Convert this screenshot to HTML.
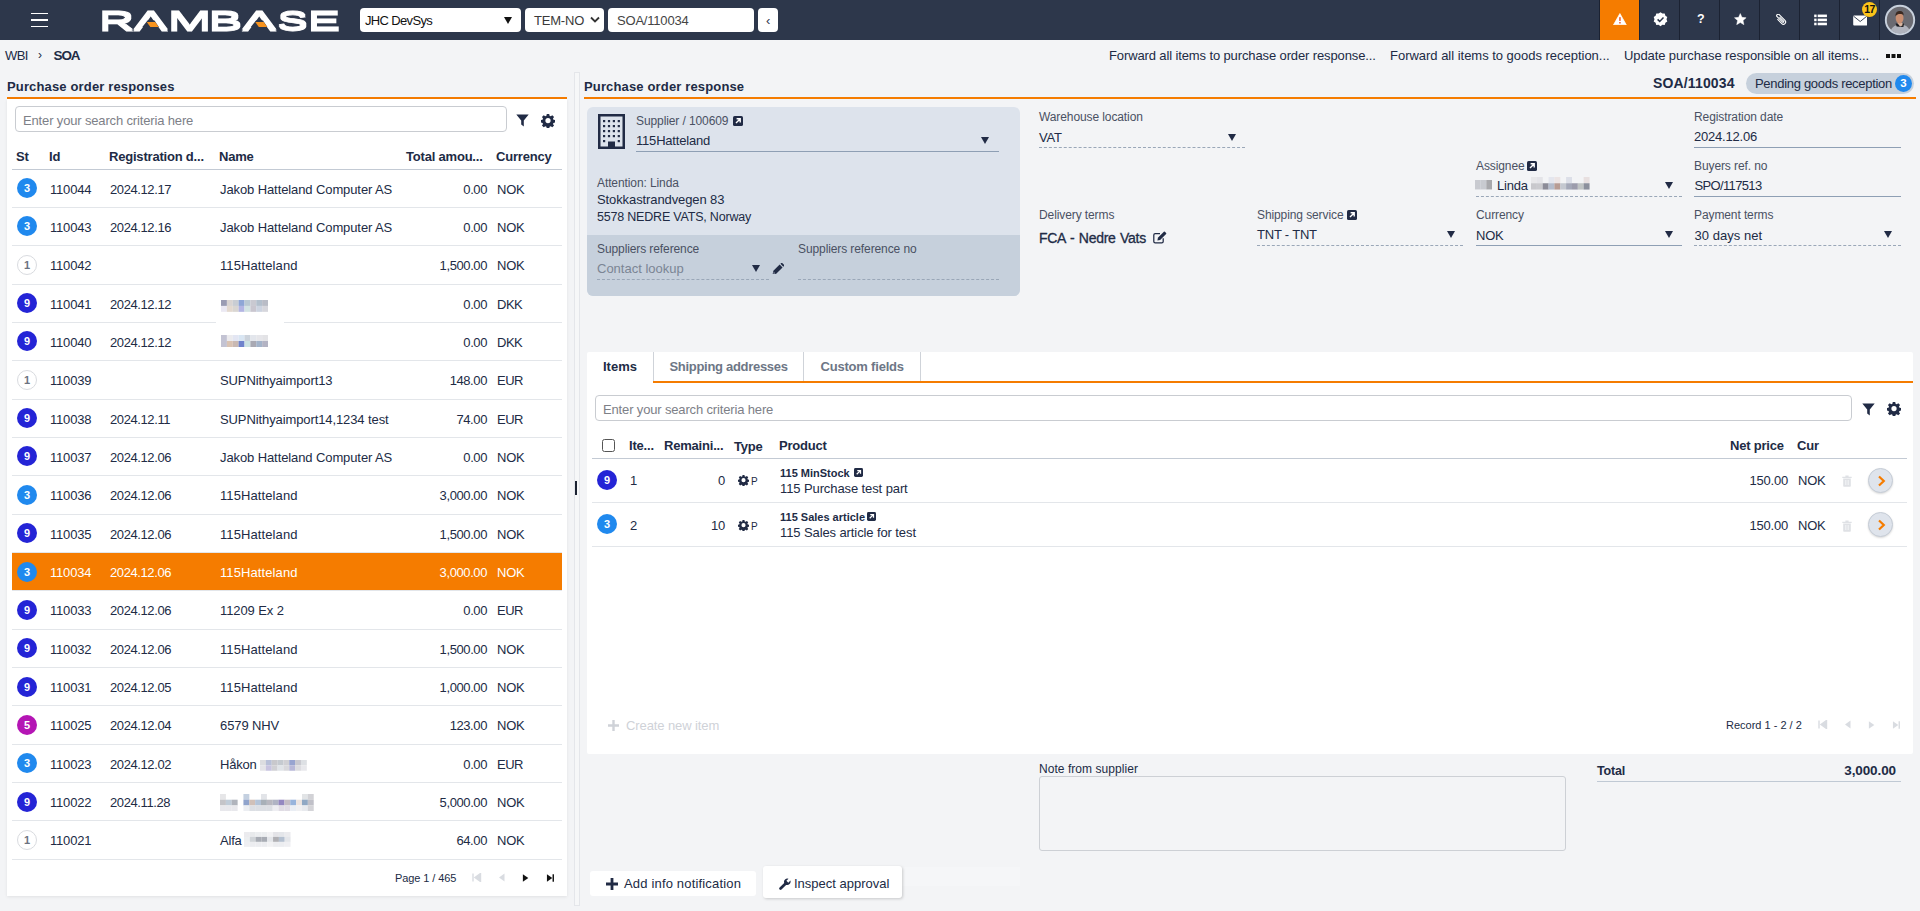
<!DOCTYPE html>
<html lang="en">
<head>
<meta charset="utf-8">
<title>RamBase - SOA/110034</title>
<style>
*{box-sizing:border-box;margin:0;padding:0}
html,body{width:1920px;height:911px;overflow:hidden}
body{background:#f3f4f6;font-family:"Liberation Sans",sans-serif;font-size:13px;color:#212b45;position:relative;letter-spacing:-0.2px}
.abs{position:absolute;white-space:nowrap}
.b{font-weight:700}
i{font-style:normal}
#topbar{position:absolute;left:0;top:0;width:1920px;height:40px;background:#2d374b}
.tbox{position:absolute;top:8px;height:24px;background:#fff;border-radius:4px;color:#111;font-size:13px;line-height:26px;white-space:nowrap}
.tcell{position:absolute;top:0;height:40px;width:40px;border-left:1px solid #1b2232}
.tcell svg{position:absolute}
.ptitle{position:absolute;font-weight:700;font-size:13px;white-space:nowrap;letter-spacing:0.15px;line-height:16px}
.oline{position:absolute;height:2px;background:#f57c00}
.card{position:absolute;background:#fff}
.search{position:absolute;height:26px;border:1px solid #c9ccd1;border-radius:4px;background:#fff;color:#7d8087;line-height:27px;padding-left:7px;white-space:nowrap;letter-spacing:-0.15px}
.th{position:absolute;font-weight:700;white-space:nowrap;letter-spacing:-0.2px;line-height:16px}
.lrow{position:absolute;left:12px;width:550px;height:38px;border-bottom:1px solid #e3e6ea}
.lrow span{position:absolute;top:12px;line-height:15px;white-space:nowrap}
.lrow.sel{background:#f57c00;color:#fff;background-clip:padding-box}
.st{position:absolute;width:20px;height:20px;border-radius:50%;color:#fff;font-weight:700;font-size:11px;line-height:20px;text-align:center;letter-spacing:0}
.st3{background:#2089ee}
.st9{background:#2424d6}
.st5{background:#b415b4}
.st1{background:#fff;border:1px solid #d9dbdf;color:#6b7280;line-height:18px}
.blur{position:absolute;background:#dfe2ea;filter:blur(.6px)}
.lbl{position:absolute;font-size:12px;color:#4a5163;white-space:nowrap;letter-spacing:-0.1px;line-height:16px}
.val{position:absolute;font-size:13px;white-space:nowrap;line-height:16px}
.uls{position:absolute;height:1px;background:#8e9fb4}
.uld{position:absolute;height:0;border-top:1px dashed #9aa7b8}
.dd{position:absolute;width:0;height:0;border-left:4.5px solid transparent;border-right:4.5px solid transparent;border-top:7px solid #212b45}
.t16{line-height:16px}
</style>
</head>
<body>
<div id="topbar">
<div class="abs" style="left:31px;top:12.5px;width:17px;height:1.5px;background:#fff"></div>
<div class="abs" style="left:31px;top:19px;width:17px;height:1.5px;background:#fff"></div>
<div class="abs" style="left:31px;top:25.5px;width:17px;height:1.5px;background:#fff"></div>
<svg class="abs" style="left:98px;top:6px" width="246" height="28" viewBox="0 0 246 28" role="img" aria-label="RAMBASE"><title>RAMBASE</title><filter id="lg" x="-5%" y="-20%" width="110%" height="140%"><feMorphology operator="dilate" radius="0 0.8"/></filter><g font-family="Liberation Sans, sans-serif" font-size="26.5" font-weight="400" fill="#fff" stroke="#fff" stroke-width="0.8" filter="url(#lg)"><text transform="translate(1.04 23.70) scale(1.838 1)">R</text><text transform="translate(36.34 23.70) scale(1.859 1)">A</text><text transform="translate(69.80 23.70) scale(1.977 1)">M</text><text transform="translate(110.51 23.70) scale(1.913 1)">B</text><text transform="translate(144.84 23.70) scale(1.859 1)">A</text><text transform="translate(179.47 23.70) scale(1.710 1)">S</text><text transform="translate(209.66 23.70) scale(1.828 1)">E</text></g><path d="M49.50 14.50 L56.50 14.50 L60.80 20.90 L44.30 20.90 Z" fill="#2d374b"/><path d="M48.80 15.90 L57.20 15.90 L60.70 21.00 L52.30 21.00 Z" fill="#f7931e"/><path d="M158.00 14.50 L165.00 14.50 L169.30 20.90 L152.80 20.90 Z" fill="#2d374b"/><path d="M157.30 15.90 L165.70 15.90 L169.20 21.00 L160.80 21.00 Z" fill="#f7931e"/></svg>
<div class="tbox" style="left:360px;width:161px;padding-left:5px;letter-spacing:-0.65px">JHC DevSys<div class="dd" style="left:144px;top:9px;border-top-color:#111"></div></div>
<div class="tbox" style="left:525px;width:79px;padding-left:9px;color:#3a3a3a">TEM-NO<svg class="abs" style="left:65px;top:8px" width="10" height="8" viewBox="0 0 10 8"><path d="M1 1.5 L5 5.5 L9 1.5" fill="none" stroke="#333" stroke-width="1.8"/></svg></div>
<div class="tbox" style="left:608px;width:146px;padding-left:9px;color:#444">SOA/110034</div>
<div class="tbox" style="left:758px;width:20px;text-align:center;color:#2d374b">&#8249;</div>
<div class="tcell" style="left:1599px;background:#f57c00"><svg style="left:13px;top:12.6px" width="13.8" height="12.6" viewBox="0 0 15 14"><path d="M7.5 0.6 L14.6 13.2 L0.4 13.2 Z" fill="#fff" stroke="#fff" stroke-width="0.8" stroke-linejoin="round"/><rect x="6.7" y="4.6" width="1.7" height="4.2" fill="#f05a28"/><rect x="6.7" y="10" width="1.7" height="1.7" fill="#f05a28"/></svg></div>
<div class="tcell" style="left:1639px"><svg style="left:13px;top:12px" width="15" height="15" viewBox="0 0 15 15"><path d="M7.5 0.3 L9.4 1.6 L11.7 1.5 L12.4 3.7 L14.3 5 L13.5 7.2 L14.3 9.4 L12.4 10.7 L11.7 12.9 L9.4 12.8 L7.5 14.2 L5.6 12.8 L3.3 12.9 L2.6 10.7 L0.7 9.4 L1.5 7.2 L0.7 5 L2.6 3.7 L3.3 1.5 L5.6 1.6 Z" fill="#fff"/><path d="M4.6 7.4 L6.7 9.4 L10.5 5.4" fill="none" stroke="#2d374b" stroke-width="1.5"/></svg></div>
<div class="tcell" style="left:1679px"><span class="abs b" style="left:17px;top:12px;color:#fff;font-size:12.5px;letter-spacing:0">?</span></div>
<div class="tcell" style="left:1719px"><svg style="left:14px;top:13px" width="12.6" height="12.4" viewBox="0 0 14 14"><path d="M7 0.6 L8.9 4.9 L13.6 5.4 L10.1 8.5 L11.1 13.2 L7 10.8 L2.9 13.2 L3.9 8.5 L0.4 5.4 L5.1 4.9 Z" fill="#fff" stroke="#fff" stroke-width="0.5" stroke-linejoin="round"/></svg></div>
<div class="tcell" style="left:1759px"><svg style="left:14.5px;top:14px" width="12" height="11.2" viewBox="0 0 14 13"><g transform="rotate(-45 7 6.5)"><path d="M3.2 2 L3.2 9.2 A2.6 2.6 0 0 0 8.4 9.2 L8.4 -0.3 A1.7 1.7 0 0 0 5 -0.3 L5 8.6 A0.85 0.85 0 0 0 6.7 8.6 L6.7 2" transform="translate(1.2 1.2)" fill="none" stroke="#fff" stroke-width="1.3"/></g></svg></div>
<div class="tcell" style="left:1799px"><svg style="left:14px;top:13.5px" width="13.3" height="12" viewBox="0 0 14 13"><g fill="#fff"><rect x="0" y="0.6" width="2.6" height="2.8"/><rect x="3.8" y="0.6" width="10" height="2.8"/><rect x="0" y="5" width="2.6" height="2.8"/><rect x="3.8" y="5" width="10" height="2.8"/><rect x="0" y="9.4" width="2.6" height="2.8"/><rect x="3.8" y="9.4" width="10" height="2.8"/></g></svg></div>
<div class="tcell" style="left:1839px"><svg style="left:13px;top:14.6px" width="14.4" height="11.2" viewBox="0 0 15 12"><rect x="0" y="0.6" width="15" height="10.6" rx="1" fill="#fff"/><path d="M0.3 1.2 L7.5 7 L14.7 1.2" fill="none" stroke="#2d374b" stroke-width="1"/></svg>
<div class="abs b" style="left:22px;top:2px;width:15px;height:15px;border-radius:50%;background:#fcc419;color:#111;font-size:10.5px;line-height:15.5px;text-align:center;letter-spacing:-0.5px">17</div></div>
<div class="tcell" style="left:1879px;width:41px"><svg style="left:4px;top:4px" width="32" height="32" viewBox="0 0 32 32"><defs><clipPath id="avc"><circle cx="16" cy="16" r="13.4"/></clipPath><filter id="avb"><feGaussianBlur stdDeviation="0.55"/></filter></defs><circle cx="16" cy="16" r="14.2" fill="#6b6b72" stroke="#c8d1dd" stroke-width="1.9"/><g clip-path="url(#avc)" filter="url(#avb)"><path d="M5.5 32 C6 24.5 9.5 22 13 21 L19.5 21 C23.5 22 26 24.5 26.5 32 Z" fill="#b0b3bd"/><path d="M11.6 19.6 L20 19.6 L19.4 23 L12.6 22.6 Z" fill="#1d1d20"/><path d="M13.4 19 L18.6 19 L18.4 21.6 L16 22.4 Z" fill="#d9b7a3"/><ellipse cx="15.6" cy="14" rx="3.9" ry="5.6" fill="#c98f72"/><path d="M11.5 12.2 C11.2 8 14 6.9 16 7 C18.6 7 19.8 8.6 19.6 11.4 C18 9.6 13.6 9.4 11.5 12.2 Z" fill="#3a2a22"/></g></svg></div>
<div class="abs t16" style="left:5px;top:48px;letter-spacing:-0.55px">WBI</div>
<div class="abs t16" style="left:38px;top:47px;font-size:12px">&#8250;</div>
<div class="abs b t16" style="left:53.5px;top:48px;font-size:13.5px;letter-spacing:-1.1px">SOA</div>
<div class="abs t16" style="left:1109px;top:48px;letter-spacing:-0.12px">Forward all items to purchase order response...</div>
<div class="abs t16" style="left:1390px;top:48px;letter-spacing:-0.02px">Forward all items to goods reception...</div>
<div class="abs t16" style="left:1624px;top:48px;letter-spacing:-0.1px">Update purchase responsible on all items...</div>
<div class="abs" style="left:1886px;top:54px;width:4px;height:4px;background:#111;box-shadow:5.5px 0 0 #111,11px 0 0 #111"></div>
<div class="ptitle" style="left:7px;top:79px">Purchase order responses</div>
<div class="oline" style="left:7px;top:97px;width:560px"></div>
<div class="card" style="left:7px;top:99px;width:560px;height:797px;box-shadow:0 1px 3px rgba(0,0,0,.08)"></div>
<div class="search" style="left:15px;top:106px;width:492px">Enter your search criteria here</div>
<svg class="abs" style="left:516px;top:114px" width="13" height="13" viewBox="0 0 13 13"><path d="M0.3 0.5 H12.7 L7.8 6.4 V12.6 L5.2 10.4 V6.4 Z" fill="#212b45"/></svg><svg class="abs" style="left:541px;top:113.5px" width="14" height="14" viewBox="0 0 16 16"><path fill="#212b45" fill-rule="evenodd" d="M6.6 0.5h2.8l.4 2.1 1.3.55 1.8-1.2 2 2-1.2 1.8.55 1.3 2.1.4v2.8l-2.1.4-.55 1.3 1.2 1.8-2 2-1.8-1.2-1.3.55-.4 2.1H6.6l-.4-2.1-1.3-.55-1.8 1.2-2-2 1.2-1.8-.55-1.3-2.1-.4V7.45l2.1-.4.55-1.3-1.2-1.8 2-2 1.8 1.2 1.3-.55zM8 5a3 3 0 1 0 0 6 3 3 0 0 0 0-6z" transform="translate(0 -0.5)"/></svg>
<div class="th" style="left:16px;top:149px">St</div>
<div class="th" style="left:49px;top:149px">Id</div>
<div class="th" style="left:109px;top:149px">Registration d...</div>
<div class="th" style="left:219px;top:149px">Name</div>
<div class="th" style="left:406px;top:149px">Total amou...</div>
<div class="th" style="left:496px;top:149px">Currency</div>
<div class="abs" style="left:12px;top:169px;width:550px;height:1px;background:#c3cad4"></div>
<div class="lrow" style="top:170px;height:38px"><i class="st st3" style="left:5px;top:8px">3</i><span style="left:38px">110044</span><span style="left:98px;letter-spacing:-0.4px">2024.12.17</span><span style="left:208px;letter-spacing:-0.1px">Jakob Hatteland Computer AS</span><span style="right:75px;letter-spacing:-0.4px">0.00</span><span style="left:485px;letter-spacing:-0.2px">NOK</span></div>
<div class="lrow" style="top:208px;height:38px"><i class="st st3" style="left:5px;top:8px">3</i><span style="left:38px">110043</span><span style="left:98px;letter-spacing:-0.4px">2024.12.16</span><span style="left:208px;letter-spacing:-0.1px">Jakob Hatteland Computer AS</span><span style="right:75px;letter-spacing:-0.4px">0.00</span><span style="left:485px;letter-spacing:-0.2px">NOK</span></div>
<div class="lrow" style="top:246px;height:39px"><i class="st st1" style="left:5px;top:9px">1</i><span style="left:38px">110042</span><span style="left:98px;letter-spacing:-0.4px"></span><span style="left:208px;letter-spacing:0.1px">115Hatteland</span><span style="right:75px;letter-spacing:-0.4px">1,500.00</span><span style="left:485px;letter-spacing:-0.2px">NOK</span></div>
<div class="lrow" style="top:285px;height:38px"><i class="st st9" style="left:5px;top:8px">9</i><span style="left:38px">110041</span><span style="left:98px;letter-spacing:-0.4px">2024.12.12</span><span style="right:75px;letter-spacing:-0.4px">0.00</span><span style="left:485px;letter-spacing:-0.5px">DKK</span></div>
<div class="lrow" style="top:323px;height:38px"><i class="st st9" style="left:5px;top:8px">9</i><span style="left:38px">110040</span><span style="left:98px;letter-spacing:-0.4px">2024.12.12</span><span style="right:75px;letter-spacing:-0.4px">0.00</span><span style="left:485px;letter-spacing:-0.5px">DKK</span></div>
<div class="lrow" style="top:361px;height:39px"><i class="st st1" style="left:5px;top:9px">1</i><span style="left:38px">110039</span><span style="left:98px;letter-spacing:-0.4px"></span><span style="left:208px;letter-spacing:-0.1px">SUPNithyaimport13</span><span style="right:75px;letter-spacing:-0.4px">148.00</span><span style="left:485px;letter-spacing:-0.5px">EUR</span></div>
<div class="lrow" style="top:400px;height:38px"><i class="st st9" style="left:5px;top:8px">9</i><span style="left:38px">110038</span><span style="left:98px;letter-spacing:-0.4px">2024.12.11</span><span style="left:208px;letter-spacing:-0.1px">SUPNithyaimport14,1234 test</span><span style="right:75px;letter-spacing:-0.4px">74.00</span><span style="left:485px;letter-spacing:-0.5px">EUR</span></div>
<div class="lrow" style="top:438px;height:38px"><i class="st st9" style="left:5px;top:8px">9</i><span style="left:38px">110037</span><span style="left:98px;letter-spacing:-0.4px">2024.12.06</span><span style="left:208px;letter-spacing:-0.1px">Jakob Hatteland Computer AS</span><span style="right:75px;letter-spacing:-0.4px">0.00</span><span style="left:485px;letter-spacing:-0.2px">NOK</span></div>
<div class="lrow" style="top:476px;height:39px"><i class="st st3" style="left:5px;top:9px">3</i><span style="left:38px">110036</span><span style="left:98px;letter-spacing:-0.4px">2024.12.06</span><span style="left:208px;letter-spacing:0.1px">115Hatteland</span><span style="right:75px;letter-spacing:-0.4px">3,000.00</span><span style="left:485px;letter-spacing:-0.2px">NOK</span></div>
<div class="lrow" style="top:515px;height:38px"><i class="st st9" style="left:5px;top:8px">9</i><span style="left:38px">110035</span><span style="left:98px;letter-spacing:-0.4px">2024.12.06</span><span style="left:208px;letter-spacing:0.1px">115Hatteland</span><span style="right:75px;letter-spacing:-0.4px">1,500.00</span><span style="left:485px;letter-spacing:-0.2px">NOK</span></div>
<div class="lrow sel" style="top:553px;height:38px"><i class="st st3" style="left:5px;top:9px">3</i><span style="left:38px">110034</span><span style="left:98px;letter-spacing:-0.4px">2024.12.06</span><span style="left:208px;letter-spacing:0.1px">115Hatteland</span><span style="right:75px;letter-spacing:-0.4px">3,000.00</span><span style="left:485px;letter-spacing:-0.2px">NOK</span></div>
<div class="lrow" style="top:591px;height:39px"><i class="st st9" style="left:5px;top:9px">9</i><span style="left:38px">110033</span><span style="left:98px;letter-spacing:-0.4px">2024.12.06</span><span style="left:208px;letter-spacing:-0.1px">11209 Ex 2</span><span style="right:75px;letter-spacing:-0.4px">0.00</span><span style="left:485px;letter-spacing:-0.5px">EUR</span></div>
<div class="lrow" style="top:630px;height:38px"><i class="st st9" style="left:5px;top:8px">9</i><span style="left:38px">110032</span><span style="left:98px;letter-spacing:-0.4px">2024.12.06</span><span style="left:208px;letter-spacing:0.1px">115Hatteland</span><span style="right:75px;letter-spacing:-0.4px">1,500.00</span><span style="left:485px;letter-spacing:-0.2px">NOK</span></div>
<div class="lrow" style="top:668px;height:38px"><i class="st st9" style="left:5px;top:9px">9</i><span style="left:38px">110031</span><span style="left:98px;letter-spacing:-0.4px">2024.12.05</span><span style="left:208px;letter-spacing:0.1px">115Hatteland</span><span style="right:75px;letter-spacing:-0.4px">1,000.00</span><span style="left:485px;letter-spacing:-0.2px">NOK</span></div>
<div class="lrow" style="top:706px;height:39px"><i class="st st5" style="left:5px;top:9px">5</i><span style="left:38px">110025</span><span style="left:98px;letter-spacing:-0.4px">2024.12.04</span><span style="left:208px;letter-spacing:-0.1px">6579 NHV</span><span style="right:75px;letter-spacing:-0.4px">123.00</span><span style="left:485px;letter-spacing:-0.2px">NOK</span></div>
<div class="lrow" style="top:745px;height:38px"><i class="st st3" style="left:5px;top:8px">3</i><span style="left:38px">110023</span><span style="left:98px;letter-spacing:-0.4px">2024.12.02</span><span style="left:208px">Håkon</span><span style="right:75px;letter-spacing:-0.4px">0.00</span><span style="left:485px;letter-spacing:-0.5px">EUR</span></div>
<div class="lrow" style="top:783px;height:38px"><i class="st st9" style="left:5px;top:9px">9</i><span style="left:38px">110022</span><span style="left:98px;letter-spacing:-0.4px">2024.11.28</span><span style="right:75px;letter-spacing:-0.4px">5,000.00</span><span style="left:485px;letter-spacing:-0.2px">NOK</span></div>
<div class="lrow" style="top:821px;height:39px"><i class="st st1" style="left:5px;top:9px">1</i><span style="left:38px">110021</span><span style="left:98px;letter-spacing:-0.4px"></span><span style="left:208px">Alfa</span><span style="right:75px;letter-spacing:-0.4px">64.00</span><span style="left:485px;letter-spacing:-0.2px">NOK</span></div>
<svg class="abs" style="left:221px;top:300px" width="47" height="11.8" viewBox="0 0 47 11.8"><rect x="0.00" y="0.00" width="5.92" height="5.95" fill="#9a9cb3"/><rect x="5.88" y="0.00" width="5.92" height="5.95" fill="#d9d4d2"/><rect x="11.75" y="0.00" width="5.92" height="5.95" fill="#c9cdd3"/><rect x="17.62" y="0.00" width="5.92" height="5.95" fill="#8fa6d6"/><rect x="23.50" y="0.00" width="5.92" height="5.95" fill="#b9c8d3"/><rect x="29.38" y="0.00" width="5.92" height="5.95" fill="#c9c9d1"/><rect x="35.25" y="0.00" width="5.92" height="5.95" fill="#b3bfcc"/><rect x="41.12" y="0.00" width="5.92" height="5.95" fill="#b9bcc6"/><rect x="0.00" y="5.90" width="5.92" height="5.95" fill="#ebe9f3"/><rect x="5.88" y="5.90" width="5.92" height="5.95" fill="#e3d9cf"/><rect x="11.75" y="5.90" width="5.92" height="5.95" fill="#d9d6d2"/><rect x="17.62" y="5.90" width="5.92" height="5.95" fill="#b3b5e3"/><rect x="23.50" y="5.90" width="5.92" height="5.95" fill="#d3e3e3"/><rect x="29.38" y="5.90" width="5.92" height="5.95" fill="#c9c6cf"/><rect x="35.25" y="5.90" width="5.92" height="5.95" fill="#ccd3e0"/><rect x="41.12" y="5.90" width="5.92" height="5.95" fill="#d6d6dc"/></svg><svg class="abs" style="left:221px;top:335px" width="47" height="12" viewBox="0 0 47 12"><rect x="0.00" y="0.00" width="5.92" height="6.05" fill="#c3c3d3"/><rect x="5.88" y="0.00" width="5.92" height="6.05" fill="#ecebee"/><rect x="11.75" y="0.00" width="5.92" height="6.05" fill="#e3e6f3"/><rect x="17.62" y="0.00" width="5.92" height="6.05" fill="#d9e6f3"/><rect x="23.50" y="0.00" width="5.92" height="6.05" fill="#ccd3dc"/><rect x="29.38" y="0.00" width="5.92" height="6.05" fill="#e3e6ec"/><rect x="35.25" y="0.00" width="5.92" height="6.05" fill="#e6e6ea"/><rect x="41.12" y="0.00" width="5.92" height="6.05" fill="#e3e3e6"/><rect x="0.00" y="6.00" width="5.92" height="6.05" fill="#c3c3d3"/><rect x="5.88" y="6.00" width="5.92" height="6.05" fill="#d9c3b3"/><rect x="11.75" y="6.00" width="5.92" height="6.05" fill="#c9b9b3"/><rect x="17.62" y="6.00" width="5.92" height="6.05" fill="#6f83cc"/><rect x="23.50" y="6.00" width="5.92" height="6.05" fill="#cce3e3"/><rect x="29.38" y="6.00" width="5.92" height="6.05" fill="#a9a9b3"/><rect x="35.25" y="6.00" width="5.92" height="6.05" fill="#a3b3c9"/><rect x="41.12" y="6.00" width="5.92" height="6.05" fill="#b3b3c3"/></svg><svg class="abs" style="left:260px;top:760px" width="46.8" height="10.7" viewBox="0 0 46.8 10.7"><rect x="0.00" y="0.00" width="5.90" height="5.40" fill="#dcdde0"/><rect x="5.85" y="0.00" width="5.90" height="5.40" fill="#b8c0d8"/><rect x="11.70" y="0.00" width="5.90" height="5.40" fill="#c8c8cc"/><rect x="17.55" y="0.00" width="5.90" height="5.40" fill="#c5cad0"/><rect x="23.40" y="0.00" width="5.90" height="5.40" fill="#d0d0d4"/><rect x="29.25" y="0.00" width="5.90" height="5.40" fill="#98a4d0"/><rect x="35.10" y="0.00" width="5.90" height="5.40" fill="#c8c8d0"/><rect x="40.95" y="0.00" width="5.90" height="5.40" fill="#dde0e4"/><rect x="0.00" y="5.35" width="5.90" height="5.40" fill="#e4e4e8"/><rect x="5.85" y="5.35" width="5.90" height="5.40" fill="#c8c4e0"/><rect x="11.70" y="5.35" width="5.90" height="5.40" fill="#d0d0d4"/><rect x="17.55" y="5.35" width="5.90" height="5.40" fill="#e0e4e8"/><rect x="23.40" y="5.35" width="5.90" height="5.40" fill="#d8d8dc"/><rect x="29.25" y="5.35" width="5.90" height="5.40" fill="#b8b8d8"/><rect x="35.10" y="5.35" width="5.90" height="5.40" fill="#dcdce0"/><rect x="40.95" y="5.35" width="5.90" height="5.40" fill="#e8e8ec"/></svg><svg class="abs" style="left:220px;top:793.8px" width="93.7" height="17.1" viewBox="0 0 93.7 17.1"><rect x="0.00" y="0.00" width="5.91" height="5.75" fill="#e6e6e8"/><rect x="23.43" y="0.00" width="5.91" height="5.75" fill="#c4d0e0"/><rect x="40.99" y="0.00" width="5.91" height="5.75" fill="#e2e4e8"/><rect x="81.99" y="0.00" width="5.91" height="5.75" fill="#e2e4e6"/><rect x="87.84" y="0.00" width="5.91" height="5.75" fill="#d2d2d6"/><rect x="0.00" y="5.70" width="5.91" height="5.75" fill="#c4c4c8"/><rect x="5.86" y="5.70" width="5.91" height="5.75" fill="#c0ccd8"/><rect x="11.71" y="5.70" width="5.91" height="5.75" fill="#b0b4bc"/><rect x="23.43" y="5.70" width="5.91" height="5.75" fill="#90a4cc"/><rect x="29.28" y="5.70" width="5.91" height="5.75" fill="#d0c0b8"/><rect x="35.14" y="5.70" width="5.91" height="5.75" fill="#b4c4d8"/><rect x="40.99" y="5.70" width="5.91" height="5.75" fill="#a8b0b8"/><rect x="46.85" y="5.70" width="5.91" height="5.75" fill="#b8b8c0"/><rect x="52.71" y="5.70" width="5.91" height="5.75" fill="#b0b4c4"/><rect x="58.56" y="5.70" width="5.91" height="5.75" fill="#9488c0"/><rect x="64.42" y="5.70" width="5.91" height="5.75" fill="#c4bcc4"/><rect x="70.28" y="5.70" width="5.91" height="5.75" fill="#98b4dc"/><rect x="76.13" y="5.70" width="5.91" height="5.75" fill="#ece4e0"/><rect x="81.99" y="5.70" width="5.91" height="5.75" fill="#90a8c4"/><rect x="87.84" y="5.70" width="5.91" height="5.75" fill="#c0c0c8"/><rect x="0.00" y="11.40" width="5.91" height="5.75" fill="#e8e8ec"/><rect x="5.86" y="11.40" width="5.91" height="5.75" fill="#e8e8ec"/><rect x="11.71" y="11.40" width="5.91" height="5.75" fill="#e8e8ec"/><rect x="23.43" y="11.40" width="5.91" height="5.75" fill="#eceef2"/><rect x="29.28" y="11.40" width="5.91" height="5.75" fill="#dcdfe4"/><rect x="35.14" y="11.40" width="5.91" height="5.75" fill="#dcdfe4"/><rect x="40.99" y="11.40" width="5.91" height="5.75" fill="#dcdfe4"/><rect x="46.85" y="11.40" width="5.91" height="5.75" fill="#dcdfe4"/><rect x="52.71" y="11.40" width="5.91" height="5.75" fill="#eeeef2"/><rect x="58.56" y="11.40" width="5.91" height="5.75" fill="#e0dce4"/><rect x="64.42" y="11.40" width="5.91" height="5.75" fill="#e0dce4"/><rect x="70.28" y="11.40" width="5.91" height="5.75" fill="#eaeef4"/><rect x="76.13" y="11.40" width="5.91" height="5.75" fill="#f0f0f2"/><rect x="81.99" y="11.40" width="5.91" height="5.75" fill="#e8eaee"/><rect x="87.84" y="11.40" width="5.91" height="5.75" fill="#d4d4d8"/></svg><svg class="abs" style="left:244.2px;top:832px" width="46.5" height="14.8" viewBox="0 0 46.5 14.8"><rect x="0.00" y="0.00" width="5.86" height="4.98" fill="#ebebee"/><rect x="5.81" y="0.00" width="5.86" height="4.98" fill="#e8eaec"/><rect x="11.62" y="0.00" width="5.86" height="4.98" fill="#eceef0"/><rect x="17.44" y="0.00" width="5.86" height="4.98" fill="#eceef0"/><rect x="23.25" y="0.00" width="5.86" height="4.98" fill="#f2f2f4"/><rect x="29.06" y="0.00" width="5.86" height="4.98" fill="#e4e4e8"/><rect x="34.88" y="0.00" width="5.86" height="4.98" fill="#e4e6ea"/><rect x="40.69" y="0.00" width="5.86" height="4.98" fill="#ebebee"/><rect x="0.00" y="4.93" width="5.86" height="4.98" fill="#eceef0"/><rect x="5.81" y="4.93" width="5.86" height="4.98" fill="#d0d4d8"/><rect x="11.62" y="4.93" width="5.86" height="4.98" fill="#a8acb4"/><rect x="17.44" y="4.93" width="5.86" height="4.98" fill="#a8acb4"/><rect x="23.25" y="4.93" width="5.86" height="4.98" fill="#e4e6ea"/><rect x="29.06" y="4.93" width="5.86" height="4.98" fill="#b0b0b4"/><rect x="34.88" y="4.93" width="5.86" height="4.98" fill="#b4c0d0"/><rect x="40.69" y="4.93" width="5.86" height="4.98" fill="#e4e6ea"/><rect x="0.00" y="9.87" width="5.86" height="4.98" fill="#efeff2"/><rect x="5.81" y="9.87" width="5.86" height="4.98" fill="#ecedf0"/><rect x="11.62" y="9.87" width="5.86" height="4.98" fill="#ecedf0"/><rect x="17.44" y="9.87" width="5.86" height="4.98" fill="#ecedf0"/><rect x="23.25" y="9.87" width="5.86" height="4.98" fill="#f2f2f4"/><rect x="29.06" y="9.87" width="5.86" height="4.98" fill="#ecedf0"/><rect x="34.88" y="9.87" width="5.86" height="4.98" fill="#ecedf0"/><rect x="40.69" y="9.87" width="5.86" height="4.98" fill="#efeff2"/></svg><div class="abs" style="left:216px;top:322px;width:68px;height:2px;background:#fff"></div><div class="abs" style="left:395px;top:871px;line-height:14px;font-size:11px;letter-spacing:-0.1px">Page 1 / 465</div>
<svg class="abs" style="left:472px;top:873px" width="10" height="9" viewBox="0 0 10 9"><path d="M1 0.5v8M8.5 0.5 3 4.5l5.5 4z" fill="#d9dce1" stroke="#d9dce1" stroke-width="1.4"/></svg>
<svg class="abs" style="left:498px;top:873px" width="8" height="9" viewBox="0 0 8 9"><path d="M6.5 0.5 1 4.5l5.5 4z" fill="#d9dce1"/></svg>
<svg class="abs" style="left:522px;top:873.5px" width="7" height="8" viewBox="0 0 8 9"><path d="M1 0.3 7.2 4.5 1 8.7z" fill="#111"/></svg>
<svg class="abs" style="left:545.5px;top:873.5px" width="9" height="8" viewBox="0 0 10 9"><path d="M1 0.3 7 4.5 1 8.7z" fill="#111"/><rect x="7.3" y="0.3" width="1.6" height="8.4" fill="#111"/></svg>

<div class="abs" style="left:574px;top:72px;width:6px;height:834px;background:#f6f7f8;border:1px solid #e4e6ea"></div>
<div class="abs" style="left:575px;top:481px;width:2px;height:14px;background:#1b2232"></div>
<div class="ptitle" style="left:584px;top:79px">Purchase order response</div>
<div class="abs b t16" style="left:1653px;top:75px;font-size:14px;letter-spacing:0.15px">SOA/110034</div>
<div class="abs" style="left:1746px;top:73px;width:167.5px;height:21px;border-radius:10.5px;background:#c6d0dc;line-height:22px;padding-left:9px;letter-spacing:-0.3px">Pending goods reception<i class="st st3" style="left:149px;top:2px;width:17px;height:17px;line-height:17px;font-size:11.5px">3</i></div>
<div class="oline" style="left:584px;top:97px;width:1332px"></div>
<div class="abs" style="left:587px;top:107px;width:433px;height:189px;border-radius:6px;background:#dde3ec;overflow:hidden"><div class="abs" style="left:0;top:128px;width:433px;height:61px;background:#c6d0dc"></div></div>
<svg class="abs" style="left:598px;top:114px" width="27" height="35" viewBox="0 0 27 35"><rect x="1.25" y="1.25" width="24.5" height="32.5" fill="none" stroke="#212b45" stroke-width="2.5"/><g fill="#212b45"><rect x="5" y="6" width="2.2" height="2.2"/><rect x="9.9" y="6" width="2.2" height="2.2"/><rect x="14.8" y="6" width="2.2" height="2.2"/><rect x="19.7" y="6" width="2.2" height="2.2"/><rect x="5" y="11" width="2.2" height="2.2"/><rect x="9.9" y="11" width="2.2" height="2.2"/><rect x="14.8" y="11" width="2.2" height="2.2"/><rect x="19.7" y="11" width="2.2" height="2.2"/><rect x="5" y="16" width="2.2" height="2.2"/><rect x="9.9" y="16" width="2.2" height="2.2"/><rect x="14.8" y="16" width="2.2" height="2.2"/><rect x="19.7" y="16" width="2.2" height="2.2"/><rect x="5" y="21" width="2.2" height="2.2"/><rect x="9.9" y="21" width="2.2" height="2.2"/><rect x="14.8" y="21" width="2.2" height="2.2"/><rect x="19.7" y="21" width="2.2" height="2.2"/><rect x="5" y="26" width="2.2" height="2.2"/><rect x="19.7" y="26" width="2.2" height="2.2"/><rect x="10" y="27.5" width="7" height="6"/></g></svg>
<div class="lbl" style="left:636px;top:113px">Supplier / 100609</div><svg class="abs" style="left:733px;top:116px" width="10" height="10" viewBox="0 0 10 10"><rect width="10" height="10" rx="1.6" fill="#212b45"/><path d="M3 7 L6.8 3.2 M3.6 2.8 H7.2 V6.4" fill="none" stroke="#fff" stroke-width="1.4"/></svg>
<div class="val" style="left:636px;top:133px">115Hatteland</div>
<div class="dd" style="left:981px;top:137px"></div>
<div class="uls" style="left:636px;top:151px;width:363px"></div>
<div class="lbl" style="left:597px;top:175px">Attention: Linda</div>
<div class="val" style="left:597px;top:192px;letter-spacing:-0.1px">Stokkastrandvegen 83</div>
<div class="val" style="left:597px;top:209px;font-size:12.5px">5578 NEDRE VATS, Norway</div>
<div class="lbl" style="left:597px;top:241px">Suppliers reference</div>
<div class="val" style="left:597px;top:261px;color:#7b8594;letter-spacing:0">Contact lookup</div>
<div class="dd" style="left:752px;top:265px"></div>
<div class="uld" style="left:597px;top:279px;width:172px"></div>
<svg class="abs" style="left:771.6px;top:262.6px" width="12.4" height="11.8" viewBox="0 0 12 12"><path d="M0.3 11.7 L1.1 8 L7.5 1.6 L10.4 4.5 L4 10.9 Z M8.3 0.8 L9.1 0 Q9.6 -0.3 10.1 0 L12 1.9 Q12.3 2.4 12 2.9 L11.2 3.7 Z" fill="#212b45"/><path d="M1.5 9.2 L2.8 10.5 L1.2 10.9 Z" fill="#c6d0dc"/></svg>
<div class="lbl" style="left:798px;top:241px">Suppliers reference no</div>
<div class="uld" style="left:798px;top:279px;width:201px"></div>
<div class="lbl" style="left:1039px;top:109px">Warehouse location</div>
<div class="val" style="left:1039px;top:130px">VAT</div><div class="dd" style="left:1228px;top:134px"></div>
<div class="uld" style="left:1039px;top:147px;width:206px"></div>
<div class="lbl" style="left:1694px;top:109px">Registration date</div>
<div class="val" style="left:1694px;top:129px">2024.12.06</div>
<div class="uls" style="left:1694px;top:147px;width:207px"></div>
<div class="lbl" style="left:1476px;top:158px">Assignee</div><svg class="abs" style="left:1527px;top:161px" width="10" height="10" viewBox="0 0 10 10"><rect width="10" height="10" rx="1.6" fill="#212b45"/><path d="M3 7 L6.8 3.2 M3.6 2.8 H7.2 V6.4" fill="none" stroke="#fff" stroke-width="1.4"/></svg>
<svg class="abs" style="left:1475px;top:180.2px" width="17" height="9.4" viewBox="0 0 17 9.4"><rect x="0.00" y="0.00" width="5.72" height="9.45" fill="#c8cad0"/><rect x="5.67" y="0.00" width="5.72" height="9.45" fill="#c8cad0"/><rect x="11.33" y="0.00" width="5.72" height="9.45" fill="#a8a8ac"/></svg>
<div class="val" style="left:1497px;top:178px">Linda</div>
<svg class="abs" style="left:1531.3px;top:177.1px" width="58.5" height="12.5" viewBox="0 0 58.5 12.5"><rect x="0.00" y="0.00" width="5.90" height="6.30" fill="#e8e8ea"/><rect x="5.85" y="0.00" width="5.90" height="6.30" fill="#e4e4e8"/><rect x="17.55" y="0.00" width="5.90" height="6.30" fill="#e4e6ee"/><rect x="23.40" y="0.00" width="5.90" height="6.30" fill="#ece4e4"/><rect x="35.10" y="0.00" width="5.90" height="6.30" fill="#dcdfe8"/><rect x="52.65" y="0.00" width="5.90" height="6.30" fill="#e8e0e0"/><rect x="0.00" y="6.25" width="5.90" height="6.30" fill="#c8c8cc"/><rect x="5.85" y="6.25" width="5.90" height="6.30" fill="#cacace"/><rect x="11.70" y="6.25" width="5.90" height="6.30" fill="#8c8c98"/><rect x="17.55" y="6.25" width="5.90" height="6.30" fill="#b4bccc"/><rect x="23.40" y="6.25" width="5.90" height="6.30" fill="#b89c94"/><rect x="29.25" y="6.25" width="5.90" height="6.30" fill="#c4c8d0"/><rect x="35.10" y="6.25" width="5.90" height="6.30" fill="#a4a8b8"/><rect x="40.95" y="6.25" width="5.90" height="6.30" fill="#9c9cac"/><rect x="46.80" y="6.25" width="5.90" height="6.30" fill="#c0c4c4"/><rect x="52.65" y="6.25" width="5.90" height="6.30" fill="#8c909c"/></svg>
<div class="dd" style="left:1665px;top:182px"></div>
<div class="uld" style="left:1476px;top:196px;width:206px"></div>
<div class="lbl" style="left:1694px;top:158px">Buyers ref. no</div>
<div class="val" style="left:1694.5px;top:178px;letter-spacing:-0.65px">SPO/117513</div>
<div class="uls" style="left:1694px;top:196px;width:207px"></div>
<div class="lbl" style="left:1039px;top:207px">Delivery terms</div>
<div class="val" style="left:1039px;top:229px;line-height:18px;font-size:14px;-webkit-text-stroke:0.3px #212b45;letter-spacing:-0.3px;word-spacing:1px">FCA - Nedre Vats</div>
<svg class="abs" style="left:1152.5px;top:231px" width="14" height="13" viewBox="0 0 14 13"><path d="M10.2 7.2 V10.4 Q10.2 11.8 8.8 11.8 H2.2 Q0.8 11.8 0.8 10.4 V4 Q0.8 2.6 2.2 2.6 H7" fill="none" stroke="#212b45" stroke-width="1.25"/><path d="M4.4 9.4 L4.9 6.7 L10.9 0.7 Q11.4 0.3 11.9 0.7 L13.1 1.9 Q13.5 2.4 13.1 2.9 L7.1 8.9 Z" fill="#212b45"/></svg>
<div class="lbl" style="left:1257px;top:207px">Shipping service</div><svg class="abs" style="left:1347px;top:210px" width="10" height="10" viewBox="0 0 10 10"><rect width="10" height="10" rx="1.6" fill="#212b45"/><path d="M3 7 L6.8 3.2 M3.6 2.8 H7.2 V6.4" fill="none" stroke="#fff" stroke-width="1.4"/></svg>
<div class="val" style="left:1257px;top:227px">TNT - TNT</div><div class="dd" style="left:1447px;top:231px"></div>
<div class="uld" style="left:1257px;top:245px;width:206px"></div>
<div class="lbl" style="left:1476px;top:207px">Currency</div>
<div class="val" style="left:1476px;top:228px">NOK</div><div class="dd" style="left:1665px;top:231px"></div>
<div class="uls" style="left:1476px;top:245px;width:206px"></div>
<div class="lbl" style="left:1694px;top:207px">Payment terms</div>
<div class="val" style="left:1694.5px;top:228px;letter-spacing:0.05px">30 days net</div><div class="dd" style="left:1884px;top:231px"></div>
<div class="uld" style="left:1694px;top:245px;width:207px"></div>
<div class="card" style="left:587px;top:352px;width:1326px;height:402px;border-radius:2px"></div>
<div class="abs b t16" style="left:603px;top:359px;letter-spacing:0">Items</div>
<div class="abs" style="left:653px;top:352px;width:1px;height:30px;background:#cfd3d9"></div>
<div class="abs b t16" style="left:669.5px;top:359px;color:#6d7686;letter-spacing:-0.3px">Shipping addresses</div>
<div class="abs" style="left:803px;top:352px;width:1px;height:30px;background:#cfd3d9"></div>
<div class="abs b t16" style="left:820.5px;top:359px;color:#6d7686;letter-spacing:-0.2px">Custom fields</div>
<div class="abs" style="left:920px;top:352px;width:1px;height:30px;background:#cfd3d9"></div>
<div class="oline" style="left:653px;top:381px;width:1260px"></div>
<div class="search" style="left:595px;top:395px;width:1257px">Enter your search criteria here</div>
<svg class="abs" style="left:1862px;top:403px" width="13" height="13" viewBox="0 0 13 13"><path d="M0.3 0.5 H12.7 L7.8 6.4 V12.6 L5.2 10.4 V6.4 Z" fill="#212b45"/></svg><svg class="abs" style="left:1886.5px;top:402px" width="14" height="14" viewBox="0 0 16 16"><path fill="#212b45" fill-rule="evenodd" d="M6.6 0.5h2.8l.4 2.1 1.3.55 1.8-1.2 2 2-1.2 1.8.55 1.3 2.1.4v2.8l-2.1.4-.55 1.3 1.2 1.8-2 2-1.8-1.2-1.3.55-.4 2.1H6.6l-.4-2.1-1.3-.55-1.8 1.2-2-2 1.2-1.8-.55-1.3-2.1-.4V7.45l2.1-.4.55-1.3-1.2-1.8 2-2 1.8 1.2 1.3-.55zM8 5a3 3 0 1 0 0 6 3 3 0 0 0 0-6z" transform="translate(0 -0.5)"/></svg>
<div class="abs" style="left:602px;top:439px;width:13px;height:13px;border:1px solid #555;border-radius:2.5px;background:#fff"></div>
<div class="th" style="left:629px;top:438px">Ite...</div>
<div class="th" style="left:664px;top:438px">Remaini...</div>
<div class="th" style="left:734px;top:439px">Type</div>
<div class="th" style="left:779px;top:438px">Product</div>
<div class="th" style="left:1730px;top:438px">Net price</div>
<div class="th" style="left:1797px;top:438px">Cur</div>
<div class="abs" style="left:592px;top:458px;width:1315px;height:1px;background:#c3cad4"></div>
<i class="st st9" style="left:597px;top:470px">9</i>
<div class="abs t16" style="left:630px;top:473px">1</div>
<div class="abs t16" style="right:1195px;top:473px">0</div>
<svg class="abs" style="left:738px;top:475px" width="11" height="11" viewBox="0 0 16 16"><path fill="#212b45" fill-rule="evenodd" d="M6.6 0.5h2.8l.4 2.1 1.3.55 1.8-1.2 2 2-1.2 1.8.55 1.3 2.1.4v2.8l-2.1.4-.55 1.3 1.2 1.8-2 2-1.8-1.2-1.3.55-.4 2.1H6.6l-.4-2.1-1.3-.55-1.8 1.2-2-2 1.2-1.8-.55-1.3-2.1-.4V7.45l2.1-.4.55-1.3-1.2-1.8 2-2 1.8 1.2 1.3-.55zM8 5a3 3 0 1 0 0 6 3 3 0 0 0 0-6z" transform="translate(0 -0.5)"/></svg><div class="abs" style="left:751px;top:475px;line-height:14px;font-size:10px;letter-spacing:0">P</div>
<div class="abs b" style="left:780px;top:466px;line-height:14px;font-size:11px;letter-spacing:0">115 MinStock</div><svg class="abs" style="left:854px;top:468px" width="9" height="9" viewBox="0 0 10 10"><rect width="10" height="10" rx="1.6" fill="#212b45"/><path d="M3 7 L6.8 3.2 M3.6 2.8 H7.2 V6.4" fill="none" stroke="#fff" stroke-width="1.4"/></svg>
<div class="abs t16" style="left:780px;top:481px;letter-spacing:-0.1px">115 Purchase test part</div>
<div class="abs t16" style="right:132px;top:473px">150.00</div>
<div class="abs t16" style="left:1798px;top:473px">NOK</div>
<svg class="abs" style="left:1842px;top:475px" width="10" height="12" viewBox="0 0 10 12"><path d="M0.3 1.8h9.4v1.2H0.3zM3.4 0.4h3.2v1.4H3.4zM1.2 3.4h7.6v7.6q0 .8-.8.8H2q-.8 0-.8-.8z" fill="#dfe1e5"/><path d="M3.5 5v5M5 5v5M6.5 5v5" stroke="#f4f5f6" stroke-width=".7"/></svg><div class="abs" style="left:1868px;top:468px;width:25px;height:25px;border-radius:50%;background:#dfe4ec;border:1px solid #c5ccd6;box-shadow:0 1px 2px rgba(0,0,0,.15)"><svg class="abs" style="left:7.5px;top:5.5px" width="9" height="12" viewBox="0 0 9 12"><path d="M2 1.5 L6.8 6 L2 10.5" fill="none" stroke="#f57c00" stroke-width="2.2"/></svg></div>
<div class="abs" style="left:592px;top:502px;width:1315px;height:1px;background:#e3e6ea"></div>
<i class="st st3" style="left:597px;top:514px">3</i>
<div class="abs t16" style="left:630px;top:518px">2</div>
<div class="abs t16" style="right:1195px;top:518px">10</div>
<svg class="abs" style="left:738px;top:520px" width="11" height="11" viewBox="0 0 16 16"><path fill="#212b45" fill-rule="evenodd" d="M6.6 0.5h2.8l.4 2.1 1.3.55 1.8-1.2 2 2-1.2 1.8.55 1.3 2.1.4v2.8l-2.1.4-.55 1.3 1.2 1.8-2 2-1.8-1.2-1.3.55-.4 2.1H6.6l-.4-2.1-1.3-.55-1.8 1.2-2-2 1.2-1.8-.55-1.3-2.1-.4V7.45l2.1-.4.55-1.3-1.2-1.8 2-2 1.8 1.2 1.3-.55zM8 5a3 3 0 1 0 0 6 3 3 0 0 0 0-6z" transform="translate(0 -0.5)"/></svg><div class="abs" style="left:751px;top:520px;line-height:14px;font-size:10px;letter-spacing:0">P</div>
<div class="abs b" style="left:780px;top:510px;line-height:14px;font-size:11px;letter-spacing:0">115 Sales article</div><svg class="abs" style="left:867px;top:512px" width="9" height="9" viewBox="0 0 10 10"><rect width="10" height="10" rx="1.6" fill="#212b45"/><path d="M3 7 L6.8 3.2 M3.6 2.8 H7.2 V6.4" fill="none" stroke="#fff" stroke-width="1.4"/></svg>
<div class="abs t16" style="left:780px;top:525px;letter-spacing:-0.1px">115 Sales article for test</div>
<div class="abs t16" style="right:132px;top:518px">150.00</div>
<div class="abs t16" style="left:1798px;top:518px">NOK</div>
<svg class="abs" style="left:1842px;top:520px" width="10" height="12" viewBox="0 0 10 12"><path d="M0.3 1.8h9.4v1.2H0.3zM3.4 0.4h3.2v1.4H3.4zM1.2 3.4h7.6v7.6q0 .8-.8.8H2q-.8 0-.8-.8z" fill="#dfe1e5"/><path d="M3.5 5v5M5 5v5M6.5 5v5" stroke="#f4f5f6" stroke-width=".7"/></svg><div class="abs" style="left:1868px;top:512px;width:25px;height:25px;border-radius:50%;background:#dfe4ec;border:1px solid #c5ccd6;box-shadow:0 1px 2px rgba(0,0,0,.15)"><svg class="abs" style="left:7.5px;top:5.5px" width="9" height="12" viewBox="0 0 9 12"><path d="M2 1.5 L6.8 6 L2 10.5" fill="none" stroke="#f57c00" stroke-width="2.2"/></svg></div>
<div class="abs" style="left:592px;top:546px;width:1315px;height:1px;background:#e3e6ea"></div>
<svg class="abs" style="left:608px;top:720px" width="11" height="11" viewBox="0 0 11 11"><path d="M5.5 0V11M0 5.5H11" stroke="#cfd2d8" stroke-width="2.4" fill="none"/></svg><div class="abs t16" style="left:626px;top:718px;color:#cfd2d8;letter-spacing:-0.1px">Create new item</div>
<div class="abs" style="left:1726px;top:718px;line-height:14px;font-size:11px;letter-spacing:0">Record 1 - 2 / 2</div>
<svg class="abs" style="left:1818px;top:720px" width="10" height="9" viewBox="0 0 10 9"><path d="M1 0.5v8M8.5 0.5 3 4.5l5.5 4z" fill="#d9dce1" stroke="#d9dce1" stroke-width="1.4"/></svg>
<svg class="abs" style="left:1844px;top:720px" width="8" height="9" viewBox="0 0 8 9"><path d="M6.5 0.5 1 4.5l5.5 4z" fill="#d9dce1"/></svg>
<svg class="abs" style="left:1868px;top:720.5px" width="7" height="8" viewBox="0 0 8 9"><path d="M1 0.3 7.2 4.5 1 8.7z" fill="#d9dce1"/></svg>
<svg class="abs" style="left:1891.5px;top:720.5px" width="9" height="8" viewBox="0 0 10 9"><path d="M1 0.3 7 4.5 1 8.7z" fill="#d9dce1"/><rect x="7.3" y="0.3" width="1.6" height="8.4" fill="#d9dce1"/></svg>

<div class="lbl" style="left:1039px;top:761px;color:#212b45;letter-spacing:0.05px">Note from supplier</div>
<div class="abs" style="left:1039px;top:776px;width:527px;height:75px;border:1px solid #cdd0d5;border-radius:3px"></div>
<div class="abs b t16" style="left:1597px;top:763px;font-size:12.5px">Total</div>
<div class="abs b t16" style="right:24px;top:763px;font-size:13.5px;letter-spacing:-0.1px">3,000.00</div>
<div class="abs" style="left:1597px;top:781px;width:304px;height:1px;background:#c0c9d4"></div>
<div class="abs" style="left:902px;top:867px;width:118px;height:19px;background:#f5f6f8"></div><div class="abs" style="left:590px;top:870.5px;width:166px;height:25px;background:#fff;border-radius:3px"></div><svg class="abs" style="left:606px;top:878px" width="12" height="12" viewBox="0 0 12 12"><path d="M6.0 0V12M0 6.0H12" stroke="#212b45" stroke-width="2.8" fill="none"/></svg><div class="abs t16" style="left:624px;top:876px;letter-spacing:0.17px">Add info notification</div>
<div class="abs" style="left:763px;top:866px;width:139px;height:32px;background:#fff;border-radius:3px;box-shadow:1px 1px 3px rgba(0,0,0,.18)"></div><svg class="abs" style="left:779px;top:878px" width="12" height="12" viewBox="0 0 12 12"><path d="M11.4 2.6 L9.3 4.7 L7.4 2.8 L9.5 0.7 A3.4 3.4 0 0 0 5.2 5 L0.6 9.6 A1.3 1.3 0 0 0 2.5 11.5 L7.1 6.9 A3.4 3.4 0 0 0 11.4 2.6 Z" fill="#212b45"/></svg><div class="abs t16" style="left:794px;top:876px;letter-spacing:0">Inspect approval</div>
</body>
</html>
